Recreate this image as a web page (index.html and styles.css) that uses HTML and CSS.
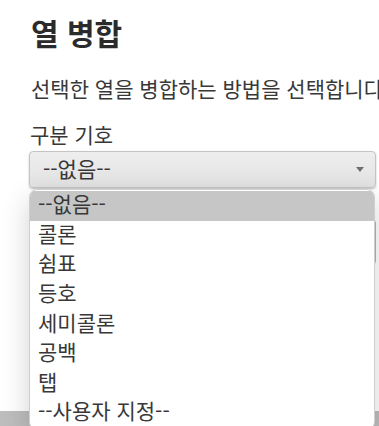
FILE: index.html
```html
<!DOCTYPE html>
<html lang="ko">
<head>
<meta charset="utf-8">
<title>열 병합</title>
<link rel="stylesheet" href="styles.css">
</head>
<body>
<main class="page">
  <h1 class="title">열 병합</h1>
  <p class="desc">선택한 열을 병합하는 방법을 선택합니다.</p>
  <label class="label">구분 기호</label>
  <div class="field">
    <div class="select">
      <span class="select-text">--없음--</span>
      <span class="arrow"></span>
    </div>
    <ul class="menu">
      <li class="item active">--없음--</li>
      <li class="item">콜론</li>
      <li class="item">쉼표</li>
      <li class="item">등호</li>
      <li class="item">세미콜론</li>
      <li class="item">공백</li>
      <li class="item">탭</li>
      <li class="item">--사용자 지정--</li>
    </ul>
  </div>
  <div class="custom"></div>
</main>
<footer class="footer"></footer>
</body>
</html>
```
FILE: styles.css
```css
html, body {
  margin: 0;
  padding: 0;
  height: 100%;
  overflow: hidden;
}
body {
  display: flex;
  flex-direction: column;
  background: #fff;
  color: #383838;
  font-family: "Noto Sans CJK KR", "Liberation Sans", sans-serif;
}
.page {
  flex: 1;
  padding: 15px 3px 0 29px;
  min-width: 0;
}
.title {
  margin: 0;
  font-size: 30px;
  line-height: 34px;
  font-weight: 700;
  color: #2b2b2b;
  padding-left: 2px;
}
.desc {
  margin: 27px 0 0;
  font-size: 21px;
  line-height: 24px;
  white-space: nowrap;
  padding-left: 2px;
}
.label {
  display: block;
  margin-top: 22px;
  font-size: 21px;
  line-height: 24px;
  padding-left: 1px;
}
.field {
  position: relative;
  margin-top: 5px;
}
.select {
  height: 35px;
  border: 1px solid #c4c4c4;
  border-radius: 4px;
  background: linear-gradient(#eeeeee, #e2e2e2);
  box-shadow: 0 1px 2px rgba(0, 0, 0, 0.25);
  display: flex;
  align-items: center;
  justify-content: space-between;
  padding: 0 11px 0 13px;
}
.select-text {
  font-size: 21px;
  line-height: 24px;
  padding-bottom: 4px;
}
.arrow {
  width: 0;
  height: 0;
  border-left: 4.5px solid transparent;
  border-right: 4.5px solid transparent;
  border-top: 5px solid #6e6e6e;
}
.menu {
  position: absolute;
  top: 38px;
  left: 0;
  width: 344px;
  margin: 0;
  padding: 1px 0;
  list-style: none;
  background: #fff;
  border: 1px solid #cfcfcf;
  border-radius: 8px;
  box-shadow: 0 10px 28px rgba(0, 0, 0, 0.18);
  overflow: hidden;
  z-index: 2;
}
.item {
  box-sizing: border-box;
  height: 29.6px;
  display: flex;
  align-items: center;
  line-height: 22px;
  padding: 0 0 5px 8px;
  font-size: 21px;
  color: #383838;
}
.item.active {
  background: #c6c6c6;
}
.custom {
  margin-top: 31px;
  height: 44px;
  border: 1px solid #b4b4b4;
  border-radius: 4px;
  background: #fafafa;
}
.footer {
  height: 15px;
  background: #bdbdbd;
}
```
